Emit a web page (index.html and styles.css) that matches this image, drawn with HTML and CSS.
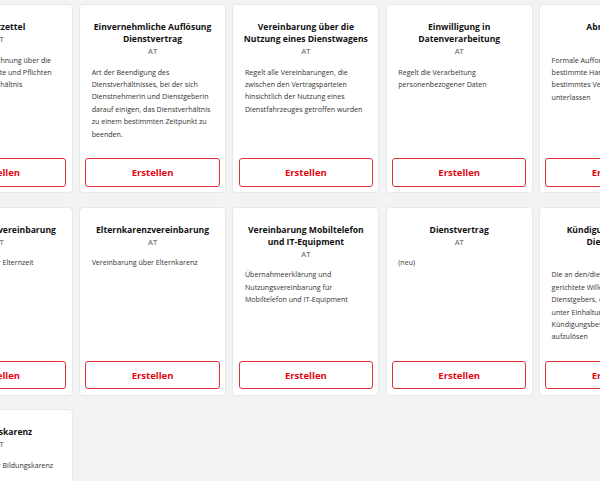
FILE: index.html
```html
<!DOCTYPE html>
<html lang="de">
<head>
<meta charset="utf-8">
<link rel="stylesheet" href="styles.css">
</head>
<body>
<div class="grid">
  <div class="card">
    <div class="head"><h3 class="title">Dienstzettel</h3><div class="country">AT</div></div>
    <p class="desc">Schriftliche Aufzeichnung über die wesentlichen Rechte und Pflichten aus dem Dienstverhältnis</p>
    <button class="btn">Erstellen</button>
  </div>
  <div class="card">
    <div class="head"><h3 class="title">Einvernehmliche Auflösung Dienstvertrag</h3><div class="country">AT</div></div>
    <p class="desc">Art der Beendigung des Dienstverhältnisses, bei der sich DienstnehmerIn und DienstgeberIn darauf einigen, das Dienstverhältnis zu einem bestimmten Zeitpunkt zu beenden.</p>
    <button class="btn">Erstellen</button>
  </div>
  <div class="card">
    <div class="head"><h3 class="title">Vereinbarung über die Nutzung eines Dienstwagens</h3><div class="country">AT</div></div>
    <p class="desc">Regelt alle Vereinbarungen, die zwischen den Vertragsparteien hinsichtlich der Nutzung eines Dienstfahrzeuges getroffen wurden</p>
    <button class="btn">Erstellen</button>
  </div>
  <div class="card">
    <div class="head"><h3 class="title">Einwilligung in Datenverarbeitung</h3><div class="country">AT</div></div>
    <p class="desc">Regelt die Verarbeitung personenbezogener Daten</p>
    <button class="btn">Erstellen</button>
  </div>
  <div class="card">
    <div class="head"><h3 class="title">Abmahnung</h3><div class="country">AT</div></div>
    <p class="desc">Formale Aufforderung, eine bestimmte Handlung oder ein bestimmtes Verhalten zu unterlassen</p>
    <button class="btn">Erstellen</button>
  </div>

  <div class="card">
    <div class="head"><h3 class="title">Elternteilzeitvereinbarung</h3><div class="country">AT</div></div>
    <p class="desc">Vereinbarung über Elternzeit</p>
    <button class="btn">Erstellen</button>
  </div>
  <div class="card">
    <div class="head"><h3 class="title">Elternkarenzvereinbarung</h3><div class="country">AT</div></div>
    <p class="desc">Vereinbarung über Elternkarenz</p>
    <button class="btn">Erstellen</button>
  </div>
  <div class="card">
    <div class="head"><h3 class="title">Vereinbarung Mobiltelefon und IT-Equipment</h3><div class="country">AT</div></div>
    <p class="desc">Übernahmeerklärung und Nutzungsvereinbarung für Mobiltelefon und IT-Equipment</p>
    <button class="btn">Erstellen</button>
  </div>
  <div class="card">
    <div class="head"><h3 class="title">Dienstvertrag</h3><div class="country">AT</div></div>
    <p class="desc">(neu)</p>
    <button class="btn">Erstellen</button>
  </div>
  <div class="card">
    <div class="head"><h3 class="title">Kündigung durch den Dienstgeber</h3><div class="country">AT</div></div>
    <p class="desc">Die an den/die Dienstnehmer/in gerichtete Willenserklärung des Dienstgebers, das Dienstverhältnis unter Einhaltung der Kündigungsbestimmungen aufzulösen</p>
    <button class="btn">Erstellen</button>
  </div>

  <div class="card">
    <div class="head"><h3 class="title">Bildungskarenz</h3><div class="country">AT</div></div>
    <p class="desc">Vereinbarung über Bildungskarenz</p>
    <button class="btn">Erstellen</button>
  </div>
</div>
</body>
</html>
```
FILE: styles.css
```css
html, body {
  margin: 0;
  padding: 0;
  background: #f2f3f3;
  overflow: hidden;
}
body {
  width: 600px;
  height: 481px;
  font-family: "Open Sans", "Noto Sans", sans-serif;
}
.grid {
  display: grid;
  grid-template-columns: repeat(5, 147px);
  grid-auto-rows: 189px;
  column-gap: 6.33px;
  row-gap: 13.7px;
  margin-left: -74.3px;
  padding-top: 4px;
  width: 800px;
}
.card {
  box-sizing: border-box;
  background: #fff;
  border: 1px solid #e7e8e8;
  border-radius: 4px;
  display: flex;
  flex-direction: column;
  padding: 16px 5.3px 5.3px;
}
.head {
  text-align: center;
  padding: 0;
}
.title {
  margin: 0;
  font-size: 8.6px;
  line-height: 12px;
  font-weight: 700;
  color: #111;
}
.country {
  font-size: 7.4px;
  line-height: 12px;
  color: #777;
  font-weight: 600;
}
.desc {
  margin: 8.6px 6.3px 0;
  font-size: 7.1px;
  line-height: 12.4px;
  color: #333;
  flex: 1;
}
.btn {
  margin-top: auto;
  height: 28.7px;
  box-sizing: border-box;
  background: #fff;
  border: 1.3px solid #e5303c;
  border-radius: 3px;
  color: #e30613;
  font-family: "Open Sans", "Noto Sans", sans-serif;
  font-weight: 700;
  font-size: 9.5px;
  padding: 0;
}
```
